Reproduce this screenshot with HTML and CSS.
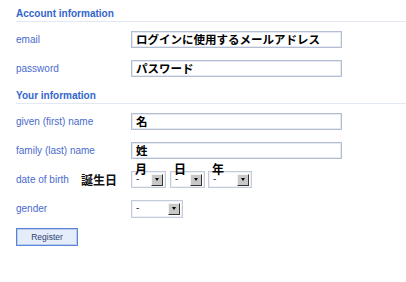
FILE: index.html
```html
<!DOCTYPE html>
<html lang="ja">
<head>
    <meta charset="UTF-8">
    <title>Register</title>
    <link rel="stylesheet" href="styles.css">
</head>
<body>
    <form class="form">
        <h2 class="section">Account information</h2>
        <div class="row">
            <label class="label">email</label>
            <div class="input">ログインに使用するメールアドレス</div>
        </div>
        <div class="row">
            <label class="label">password</label>
            <div class="input">パスワード</div>
        </div>

        <h2 class="section section-2">Your information</h2>
        <div class="row">
            <label class="label">given (first) name</label>
            <div class="input">名</div>
        </div>
        <div class="row">
            <label class="label">family (last) name</label>
            <div class="input">姓</div>
        </div>
        <div class="row">
            <label class="label label-dob">date of birth</label>
            <span class="dob-note">誕生日</span>
            <div class="dob">
                <div class="date-part">
                    <span class="date-lbl">月</span>
                    <div class="select select-md"><span class="select-val">-</span><span class="select-btn"></span></div>
                </div>
                <div class="date-part">
                    <span class="date-lbl">日</span>
                    <div class="select select-md"><span class="select-val">-</span><span class="select-btn"></span></div>
                </div>
                <div class="date-part date-year">
                    <span class="date-lbl">年</span>
                    <div class="select select-yr"><span class="select-val">-</span><span class="select-btn"></span></div>
                </div>
            </div>
        </div>
        <div class="row">
            <label class="label">gender</label>
            <div class="select select-gender"><span class="select-val">-</span><span class="select-btn"></span></div>
        </div>
        <button type="button" class="register">Register</button>
    </form>
</body>
</html>
```

FILE: styles.css
```css
body {
    margin: 0;
    padding: 8px 0 0 16px;
    background: #fff;
    font-family: "Liberation Sans", Arial, "Noto Sans CJK JP", sans-serif;
}
.section {
    margin: 0;
    padding: 0 0 1px 0;
    font-size: 10px;
    line-height: 12px;
    font-weight: bold;
    color: #3366cc;
    border-bottom: 1px solid #e3e9f2;
    margin-bottom: 9px;
}
.section-2 {
    margin-top: 13px;
}
.row {
    display: flex;
    align-items: center;
    height: 17px;
    margin-bottom: 12px;
}
.label {
    width: 115px;
    flex-shrink: 0;
    font-size: 10px;
    color: #4a6bcd;
}
.label-dob {
    width: 65px;
}
.dob-note {
    width: 50px;
    font-family: "Noto Sans CJK JP", sans-serif;
    font-weight: bold;
    font-size: 12px;
    color: #111;
}
.input {
    box-sizing: border-box;
    width: 211px;
    height: 17px;
    border: 1px solid #b3bed3;
    box-shadow: inset 0 0 0 1px #e4e9f2;
    padding: 0 4px;
    font-family: "Noto Sans CJK JP", sans-serif;
    font-weight: bold;
    font-size: 11.5px;
    line-height: 15px;
    color: #000;
    white-space: nowrap;
}
.dob {
    display: flex;
    gap: 4px;
}
.date-year {
    margin-left: -1px;
}
.date-part {
    display: flex;
    flex-direction: column;
}
.date-lbl {
    z-index: 1;
    height: 7px;
    margin-top: -7px;
    padding-left: 4px;
    font-family: "Noto Sans CJK JP", sans-serif;
    font-weight: bold;
    font-size: 12px;
    line-height: 10px;
    color: #000;
}
.select {
    box-sizing: border-box;
    height: 17px;
    display: flex;
    align-items: center;
    justify-content: space-between;
    border: 1px solid #c3cbdb;
    box-shadow: inset 0 0 0 1px #eef1f6;
    padding: 0 2px 0 4px;
    font-size: 10px;
    color: #333;
}
.select-md {
    width: 35px;
}
.select-yr {
    width: 44px;
}
.select-gender {
    width: 52px;
    height: 18px;
}
.select-val {
    line-height: 8px;
    margin-top: -1px;
}
.select-btn {
    box-sizing: border-box;
    width: 12px;
    height: 12px;
    background: #c8c8c8;
    border-top: 1px solid #f4f4f4;
    border-left: 1px solid #f4f4f4;
    border-right: 1px solid #333;
    border-bottom: 1px solid #333;
    display: flex;
    align-items: center;
    justify-content: center;
}
.select-btn::after {
    content: '';
    border-left: 2.5px solid transparent;
    border-right: 2.5px solid transparent;
    border-top: 3px solid #000;
}
.register {
    display: block;
    margin: -1px 0 0 0;
    width: 62px;
    height: 18px;
    padding: 0;
    background: #e6edfa;
    border: 1px solid #5c84d6;
    box-shadow: inset 0 0 0 1px #b9ccef;
    font-family: "Liberation Sans", Arial, sans-serif;
    font-size: 8.5px;
    color: #2d3f70;
}
```
